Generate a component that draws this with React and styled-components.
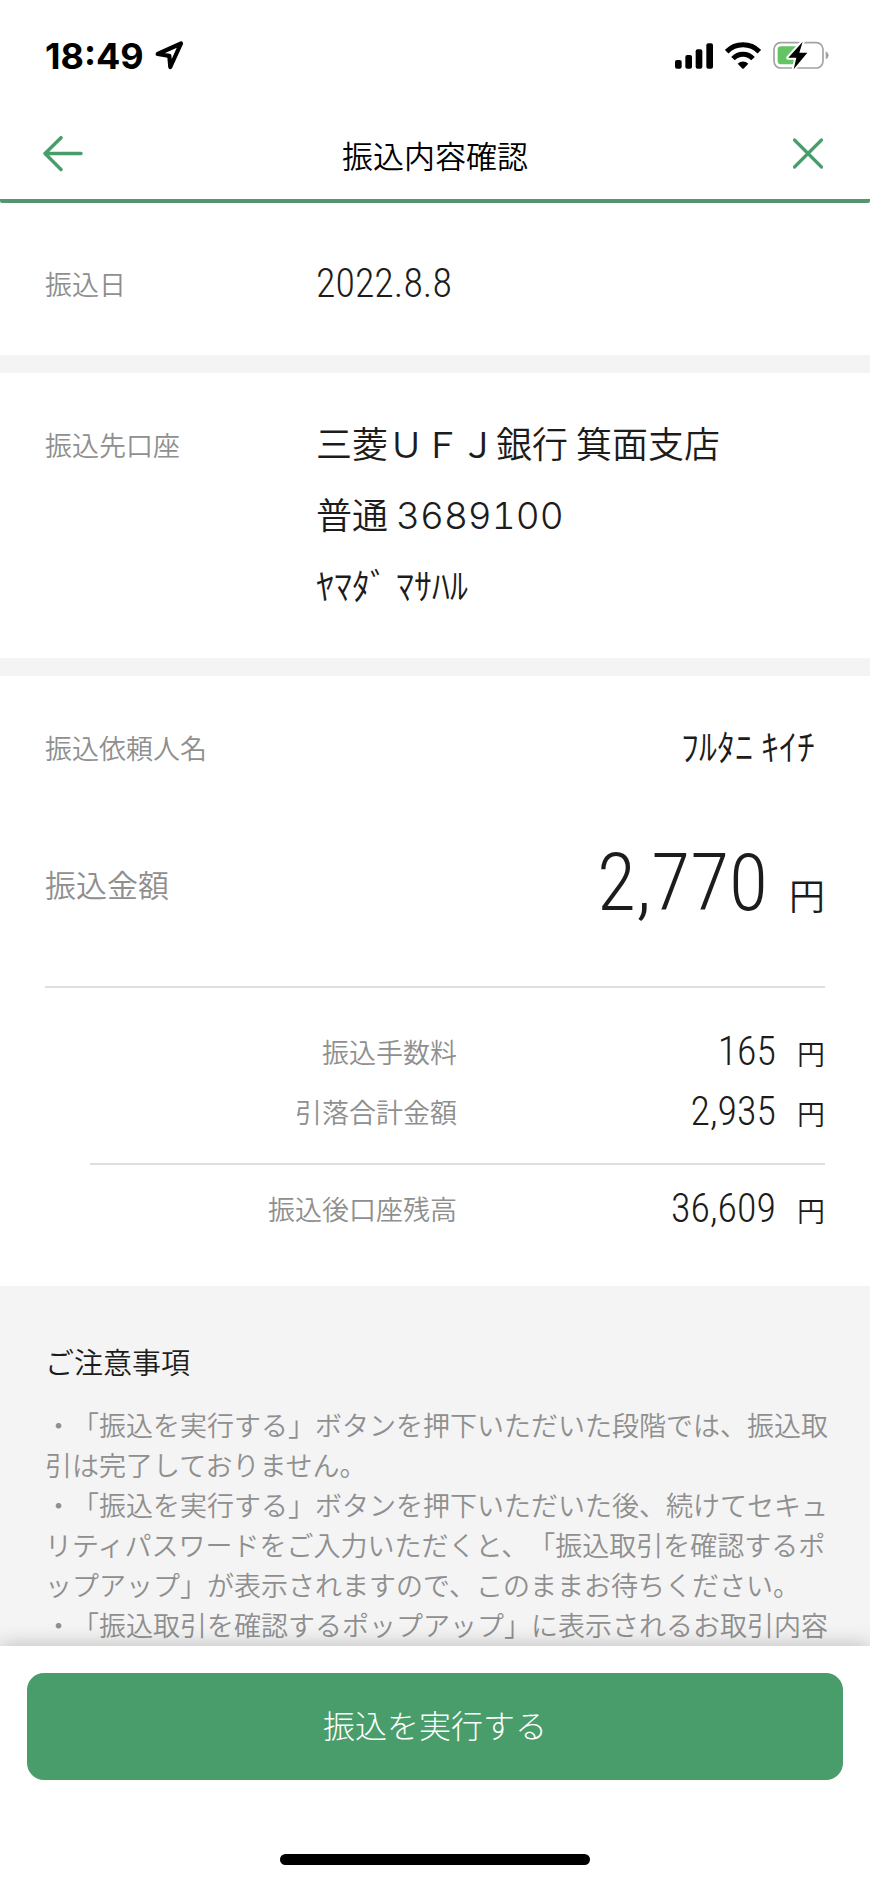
import styled, { createGlobalStyle } from "styled-components";

const GlobalStyle = createGlobalStyle`
  :root {
    --green: #489d6a;
    --line-green: #55946e;
    --ink: #1c1c1c;
    --muted: #8f8f8f;
    --band: #f4f4f4;
    --rule: #dedede;
    --jp: "Noto Sans CJK JP", sans-serif;
    --digits: "Roboto Condensed", "Liberation Sans Narrow", "Noto Sans CJK JP", sans-serif;
  }

  * {
    box-sizing: border-box;
  }

  body {
    margin: 0;
    background: white;
    color: var(--ink);
    font-family: var(--jp);
    font-weight: 350;
  }
`;

const Screen = styled.div`
  height: 100vh;
  display: flex;
  flex-direction: column;
`;

const StatusBar = styled.div`
  flex: none;
  height: 111px;
  padding: 0 41px 0 45px;
  display: flex;
  align-items: center;
  justify-content: space-between;
`;

const StatusGroup = styled.div`
  display: flex;
  align-items: center;
  gap: ${({ $gap }) => $gap}px;

  svg {
    display: block;
  }
`;

const Time = styled.span`
  font-family: Inter, sans-serif;
  font-weight: 700;
  font-size: 36px;
  line-height: 40px;
  color: black;
`;

const Header = styled.header`
  flex: none;
  height: 92px;
  padding: 0 40px;
  display: flex;
  align-items: center;
  justify-content: space-between;
  border-bottom: 4px solid var(--line-green);
  border-radius: 2px;
`;

const Title = styled.h1`
  margin: 0;
  font-size: 31px;
  line-height: 44px;
  font-weight: 350;
  color: black;
`;

const IconButton = styled.button`
  width: 46px;
  height: 44px;
  padding: 0;
  border: 0;
  background: none;
  color: var(--green);
  display: flex;
  align-items: center;
  justify-content: ${({ $side }) => ($side === "left" ? "flex-start" : "flex-end")};
  cursor: pointer;
`;

const Content = styled.main`
  flex: 1;
  min-height: 0;
  overflow-y: auto;
  scrollbar-width: none;
  background: var(--band);
`;

const Section = styled.dl`
  margin: 0 0 ${({ $last }) => ($last ? 0 : 18)}px;
  padding: ${({ $pad }) => $pad};
  background: white;
`;

const Row = styled.div`
  display: flex;
  align-items: flex-start;
  justify-content: space-between;
`;

const TotalRow = styled(Row)`
  align-items: center;
  height: 150px;
  margin-top: 23px;
`;

const Label = styled.dt`
  flex: none;
  width: ${({ $wide }) => ($wide ? "auto" : "271px")};
  font-size: ${({ $big }) => ($big ? 31 : 27)}px;
  line-height: 76px;
  color: var(--muted);
`;

const Value = styled.dd`
  margin: 0;
  flex: ${({ $fill }) => ($fill ? 1 : "none")};
  padding-right: ${({ $inset }) => ($inset ? 10 : 0)}px;
  font-size: 36px;
  line-height: 71px;
`;

const Digits = styled.span`
  font-family: var(--digits);
  font-weight: 300;
  font-size: ${({ $big }) => ($big ? 80 : 40)}px;
  line-height: 1;
`;

const AccountNumber = styled.span`
  font-family: Inter, sans-serif;
  font-weight: 300;
  font-size: 37px;
  line-height: 1;
  font-feature-settings: "tnum";
`;

const Amount = styled.dd`
  margin: 0;
  flex: 1;
  display: flex;
  align-items: baseline;
  justify-content: flex-end;
  gap: 21px;
  line-height: 62px;
`;

const Yen = styled.span`
  font-size: ${({ $big }) => ($big ? 36 : 28)}px;
`;

const Breakdown = styled.dl`
  margin: 0;
  padding: ${({ $pad }) => $pad};
  border-top: 2px solid var(--rule);

  ${Row} {
    height: 60px;
  }

  dt {
    width: 412px;
    line-height: 60px;
    text-align: right;
  }
`;

const BalanceBreakdown = styled(Breakdown)`
  margin-left: 45px;

  dt {
    width: 367px;
  }
`;

const Panel = styled.div`
  padding: 34px 45px 47px;
  background: white;
`;

const Notes = styled.section`
  padding: 53px 36px 0 45px;
`;

const NotesTitle = styled.h2`
  margin: 0 0 22px;
  font-size: 29px;
  line-height: 44px;
  font-weight: 350;
`;

const Note = styled.p`
  margin: 0;
  font-size: 27px;
  line-height: 40px;
  color: var(--muted);
  line-break: anywhere;
  text-spacing-trim: space-all;
`;

const Footer = styled.footer`
  flex: none;
  position: relative;
  padding: 27px 27px 18px;
  background: white;
  box-shadow: 0 0 20px rgba(0, 0, 0, 0.25);
  display: flex;
  flex-direction: column;
  align-items: center;
  gap: 74px;
`;

const SubmitButton = styled.button`
  width: 100%;
  height: 107px;
  padding: 0 0 5px;
  border: 0;
  border-radius: 17px;
  background: var(--green);
  color: white;
  font-family: var(--jp);
  font-size: 32px;
  font-weight: 300;
  cursor: pointer;
`;

const HomeIndicator = styled.div`
  width: 310px;
  height: 11px;
  border-radius: 6px;
  background: black;
`;

const LocationIcon = () => (
  <svg width="29" height="29" viewBox="0 0 29 29" aria-hidden="true">
    <path
      d="M2.7 13 L26 2.5 L15.3 26 L14.3 14.8 Z"
      fill="none"
      stroke="black"
      strokeWidth="4.2"
      strokeLinejoin="round"
    />
  </svg>
);

const SignalIcon = () => (
  <svg width="38" height="26" viewBox="0 0 114 78" aria-hidden="true">
    <rect x="0" y="51" width="20" height="26" rx="6" />
    <rect x="31" y="36" width="20" height="41" rx="6" />
    <rect x="62" y="19" width="20" height="58" rx="6" />
    <rect x="94" y="1" width="20" height="76" rx="6" />
  </svg>
);

const WifiIcon = () => (
  <svg width="36" height="27" viewBox="0 0 108 81" aria-hidden="true">
    <g fill="none" stroke="black" strokeWidth="15">
      <path d="M5 29 A69 69 0 0 1 103 29" />
      <path d="M24 50 A41 41 0 0 1 84 50" />
    </g>
    <path d="M38 65 A23 23 0 0 1 70 65 L57 79 Q54 82 51 79 Z" />
  </svg>
);

const BatteryIcon = () => (
  <svg width="56" height="29" viewBox="0 0 168 87" aria-hidden="true">
    <rect x="3" y="5" width="147" height="76" rx="20" fill="none" stroke="#a3a3a3" strokeWidth="5" />
    <path d="M158 31 Q167 35 167 43 Q167 51 158 55 Z" fill="#a3a3a3" />
    <path d="M24 16 H70 V70 H24 Q14 70 14 60 V26 Q14 16 24 16 Z" fill="#63c466" />
    <path
      d="M89 2 L46 50 H70 L62 85 L103 35 H79 Z"
      fill="black"
      stroke="white"
      strokeWidth="12"
      strokeLinejoin="round"
      paintOrder="stroke"
    />
  </svg>
);

const BackIcon = () => (
  <svg width="44" height="38" viewBox="0 0 44 38" aria-hidden="true">
    <path
      d="M21 1.7 L5 17.5 L21 33.5 M5 17.5 H41"
      fill="none"
      stroke="currentColor"
      strokeWidth="3.4"
      strokeLinecap="round"
      strokeLinejoin="round"
    />
  </svg>
);

const CloseIcon = () => (
  <svg width="44" height="38" viewBox="0 0 44 38" aria-hidden="true">
    <path
      d="M8.5 4 L35.5 31 M35.5 4 L8.5 31"
      fill="none"
      stroke="currentColor"
      strokeWidth="3.2"
      strokeLinecap="round"
    />
  </svg>
);

const AmountRow = ({ label, amount }) => (
  <Row>
    <Label>{label}</Label>
    <Amount>
      <Digits>{amount}</Digits>
      <Yen>円</Yen>
    </Amount>
  </Row>
);

const notes = [
  "・「振込を実行する」ボタンを押下いただいた段階では、振込取引は完了しておりません。",
  "・「振込を実行する」ボタンを押下いただいた後、続けてセキュリティパスワードをご入力いただくと、「振込取引を確認するポップアップ」が表示されますので、このままお待ちください。",
  "・「振込取引を確認するポップアップ」に表示されるお取引内容",
];

const App = () => {
  return (
    <Screen lang="ja">
      <GlobalStyle />
      <StatusBar>
        <StatusGroup $gap={11}>
          <Time>18:49</Time>
          <LocationIcon />
        </StatusGroup>
        <StatusGroup $gap={12}>
          <SignalIcon />
          <WifiIcon />
          <BatteryIcon />
        </StatusGroup>
      </StatusBar>

      <Header>
        <IconButton $side="left" aria-label="戻る">
          <BackIcon />
        </IconButton>
        <Title>振込内容確認</Title>
        <IconButton $side="right" aria-label="閉じる">
          <CloseIcon />
        </IconButton>
      </Header>

      <Content>
        <Section $pad="43px 45px 33px">
          <Row>
            <Label>振込日</Label>
            <Value $fill>
              <Digits>2022.8.8</Digits>
            </Value>
          </Row>
        </Section>

        <Section $pad="34px 45px 38px">
          <Row>
            <Label>振込先口座</Label>
            <Value $fill>
              三菱ＵＦＪ銀行 箕面支店
              <br />
              普通 <AccountNumber>3689100</AccountNumber>
              <br />
              ﾔﾏﾀﾞ ﾏｻﾊﾙ
            </Value>
          </Row>
        </Section>

        <Panel>
          <Section $last $pad="0 0 27px">
            <Row>
              <Label $wide>振込依頼人名</Label>
              <Value $inset>ﾌﾙﾀﾆ ｷｲﾁ</Value>
            </Row>
            <TotalRow>
              <Label $wide $big>
                振込金額
              </Label>
              <Amount>
                <Digits $big>2,770</Digits>
                <Yen $big>円</Yen>
              </Amount>
            </TotalRow>
          </Section>
          <Breakdown $pad="34px 0 21px">
            <AmountRow label="振込手数料" amount="165" />
            <AmountRow label="引落合計金額" amount="2,935" />
          </Breakdown>
          <BalanceBreakdown $pad="14px 0 0">
            <AmountRow label="振込後口座残高" amount="36,609" />
          </BalanceBreakdown>
        </Panel>

        <Notes>
          <NotesTitle>ご注意事項</NotesTitle>
          {notes.map((note) => (
            <Note key={note}>{note}</Note>
          ))}
        </Notes>
      </Content>

      <Footer>
        <SubmitButton type="button">振込を実行する</SubmitButton>
        <HomeIndicator />
      </Footer>
    </Screen>
  );
};

export default App;
